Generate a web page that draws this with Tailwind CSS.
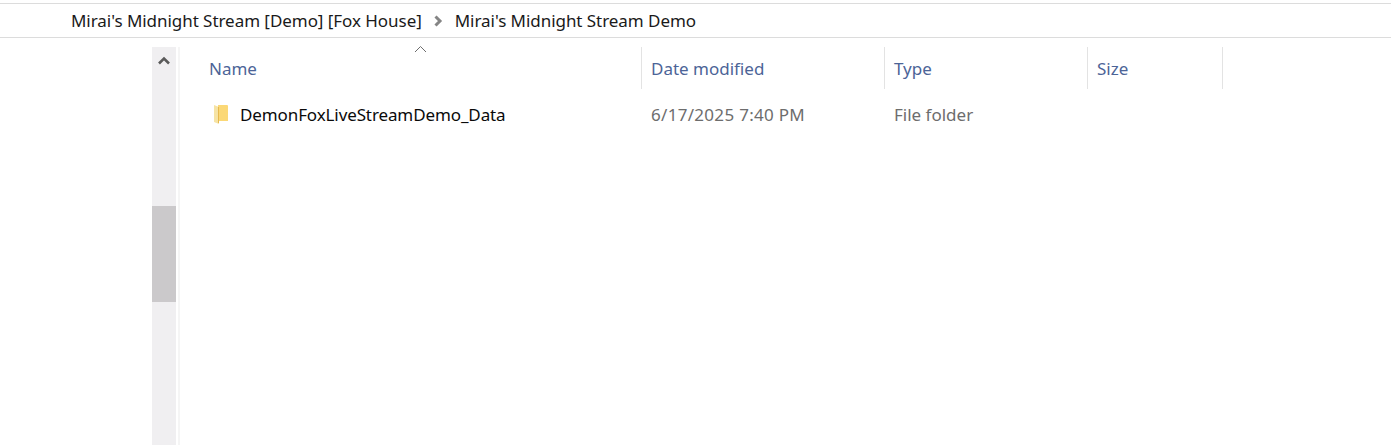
<!DOCTYPE html>
<html><head><meta charset="utf-8"><script src="https://cdn.jsdelivr.net/npm/@tailwindcss/browser@4"></script></head>
<body class="bg-white overflow-hidden">
<div class="w-[1391px] h-[445px] flex flex-col overflow-hidden bg-white font-['Noto_Sans','Open_Sans',sans-serif]">
  <div class="h-[3px] shrink-0"></div>
  <div class="h-[35px] shrink-0 border-y border-[#dcdcdc] flex items-center pl-[71px] text-[17px] tracking-[-0.05px] text-[#1a1a1a]">
    <span>Mirai's Midnight Stream [Demo] [Fox House]</span>
    <svg class="ml-[11px] mr-[12px]" width="10" height="12" viewBox="0 0 10 12"><path d="M2.5 1.5 L7 6 L2.5 10.5" fill="none" stroke="#858585" stroke-width="3"/></svg>
    <span>Mirai's Midnight Stream Demo</span>
  </div>
  <div class="flex-1 flex pt-[9px] pl-[152px]">
    <div class="w-[24px] bg-[#f0eff1] flex flex-col">
      <div class="h-[159px] flex justify-center pt-[9px]">
        <svg width="12" height="9" viewBox="0 0 12 9"><path d="M1 7.5 L6 2.5 L11 7.5" fill="none" stroke="#5a5a5a" stroke-width="2.6"/></svg>
      </div>
      <div class="h-[96px] bg-[#cbc9cb]"></div>
    </div>
    <div class="w-[2px] ml-[2px] bg-[#f5f5f5]"></div>
    <div class="flex-1 flex flex-col relative">
      <svg class="absolute left-[234px] -top-[2px]" width="13" height="8" viewBox="0 0 13 8"><path d="M1 7 L6.5 1.5 L12 7" fill="none" stroke="#6d6d6d" stroke-width="1"/></svg>
      <div class="h-[42px] shrink-0 flex text-[17px] text-[#4c6497]">
        <div class="w-[462px] pl-[29px] pt-[9px] border-r border-[#e3e3e3]">Name</div>
        <div class="w-[243px] pl-[9px] pt-[9px] border-r border-[#e3e3e3]">Date modified</div>
        <div class="w-[203px] pl-[9px] pt-[9px] border-r border-[#e3e3e3]">Type</div>
        <div class="w-[135px] pl-[9px] pt-[9px] border-r border-[#e3e3e3]">Size</div>
      </div>
      <div class="flex text-[17px] text-[#6d6d6d] pt-[13px]">
        <div class="w-[462px] pl-[33px] flex items-center">
          <svg class="mr-[11px] shrink-0 -mt-[1px]" width="16" height="22" viewBox="0 0 16 22"><path d="M5 2 H14 Q15 2 15 3 V18 H5 Z" fill="#fbd876"/><path d="M1 2 L6 4 V21 L1 19 Z" fill="#f6e3a4"/><path d="M5 4 L6 4 V20 H5 Z" fill="#e6b94e"/></svg>
          <span class="text-[#0a0a0a] tracking-[-0.11px]">DemonFoxLiveStreamDemo_Data</span>
        </div>
        <div class="w-[243px] pl-[9px] tracking-[0.3px]">6/17/2025 7:40 PM</div>
        <div class="w-[203px] pl-[9px]">File folder</div>
      </div>
    </div>
  </div>
</div>
</body></html>
